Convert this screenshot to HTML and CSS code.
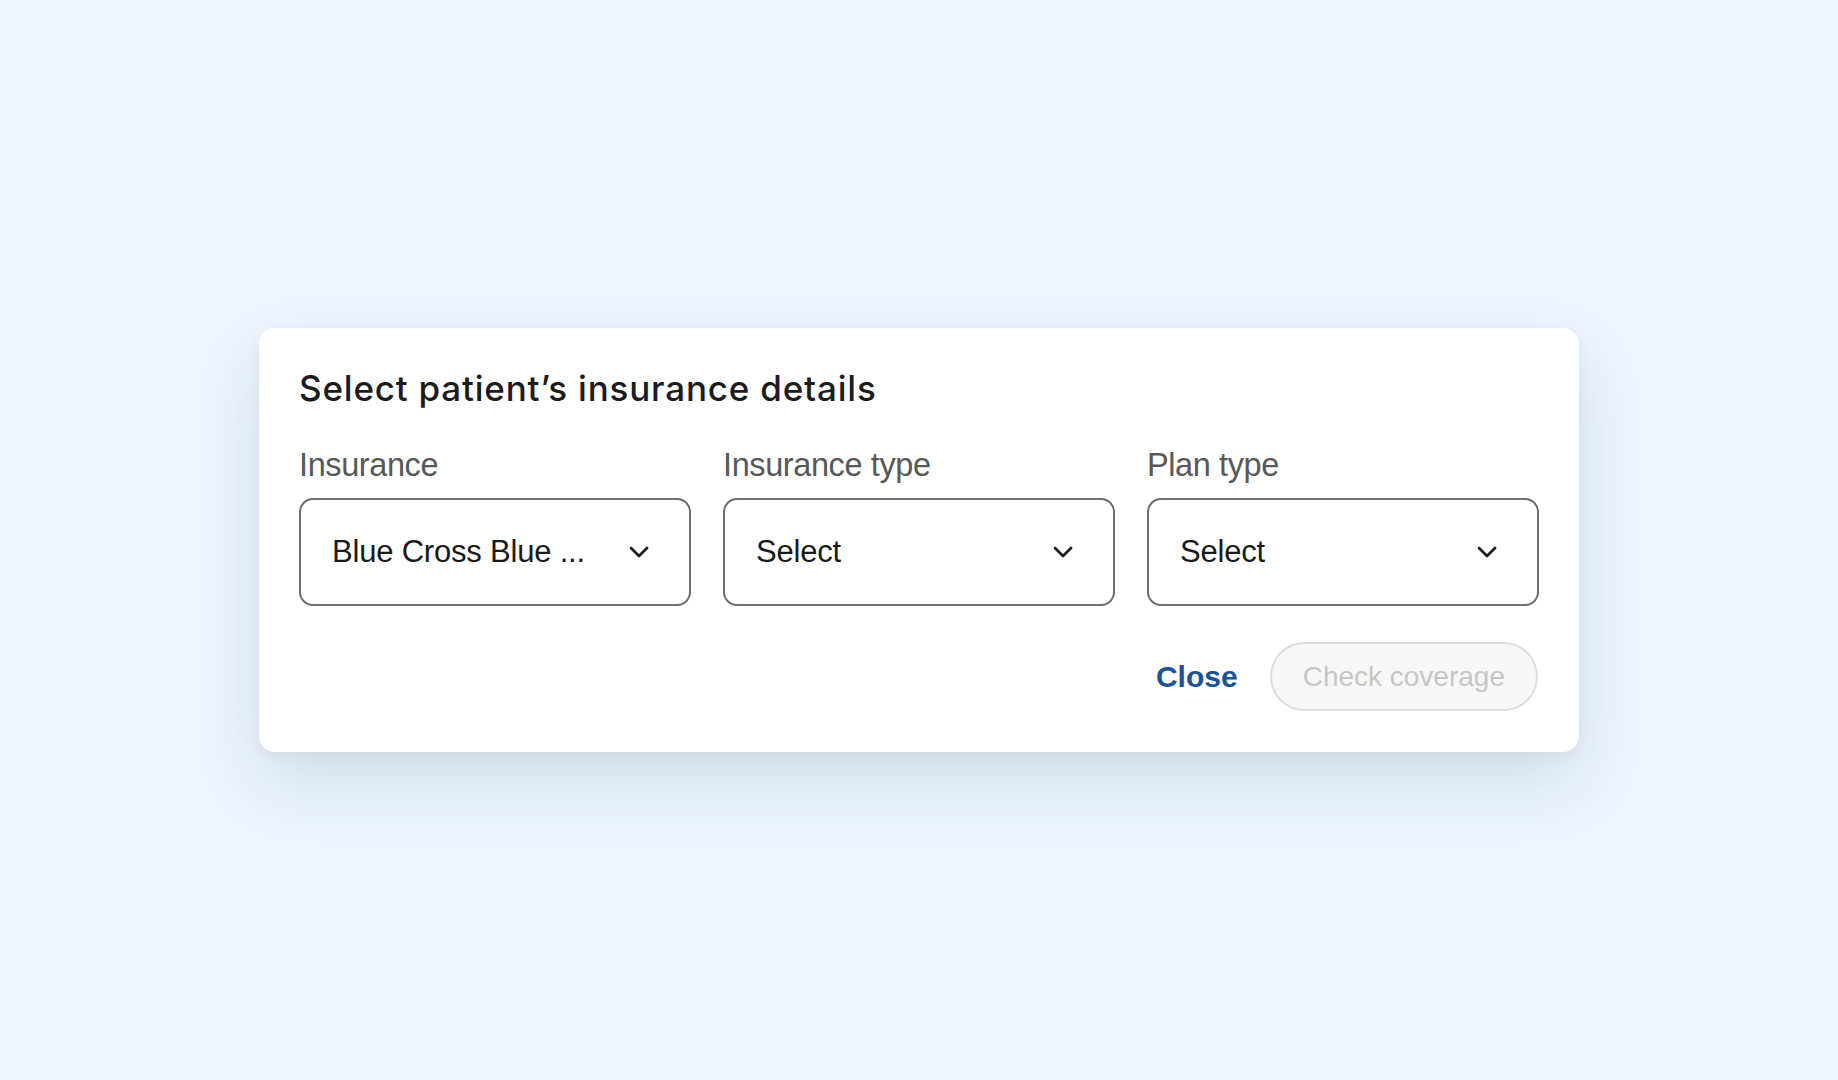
FILE: index.html
```html
<!DOCTYPE html>
<html lang="en">
<head>
<meta charset="utf-8">
<title>Select patient's insurance details</title>
<link rel="stylesheet" href="styles.css">
</head>
<body>
<main class="page">
  <section class="card">
    <h1 class="title">Select patient’s insurance details</h1>
    <div class="fields">
      <div class="field">
        <div class="label">Insurance</div>
        <div class="select">
          <span class="value">Blue Cross Blue ...</span>
          <svg class="chev" viewBox="0 0 20 12" width="20" height="12"><path d="M2 2 L10 10 L18 2" fill="none" stroke="#1f1f1f" stroke-width="2.8" stroke-linecap="round" stroke-linejoin="round"/></svg>
        </div>
      </div>
      <div class="field">
        <div class="label">Insurance type</div>
        <div class="select">
          <span class="value">Select</span>
          <svg class="chev" viewBox="0 0 20 12" width="20" height="12"><path d="M2 2 L10 10 L18 2" fill="none" stroke="#1f1f1f" stroke-width="2.8" stroke-linecap="round" stroke-linejoin="round"/></svg>
        </div>
      </div>
      <div class="field">
        <div class="label">Plan type</div>
        <div class="select">
          <span class="value">Select</span>
          <svg class="chev" viewBox="0 0 20 12" width="20" height="12"><path d="M2 2 L10 10 L18 2" fill="none" stroke="#1f1f1f" stroke-width="2.8" stroke-linecap="round" stroke-linejoin="round"/></svg>
        </div>
      </div>
    </div>
    <div class="actions">
      <button class="link-btn" type="button">Close</button>
      <button class="pill-btn" type="button" disabled>Check coverage</button>
    </div>
  </section>
</main>
</body>
</html>
```

FILE: styles.css
```css
* { box-sizing: border-box; }

html, body {
  margin: 0;
  padding: 0;
}

body {
  background: #eef5fd;
  font-family: "Liberation Sans", Arial, sans-serif;
  color: #1d1d1d;
}

.page {
  min-height: 1080px;
  display: flex;
  align-items: center;
  justify-content: center;
}

.card {
  width: 1320px;
  background: #ffffff;
  border-radius: 16px;
  padding: 40px 40px 41px;
  box-shadow: 0 30px 70px rgba(40, 70, 110, 0.14), 0 4px 12px rgba(40, 70, 110, 0.05);
}

.title {
  margin: 0;
  font-family: "Inter", "Liberation Sans", sans-serif;
  font-weight: 500;
  font-size: 35px;
  line-height: 40px;
  color: #1c1c1c;
  letter-spacing: 0.8px;
}

.fields {
  display: grid;
  grid-template-columns: repeat(3, 1fr);
  gap: 32px;
  margin-top: 39px;
}

.label {
  font-size: 32.5px;
  line-height: 36px;
  color: #585858;
  letter-spacing: -0.4px;
  margin-bottom: 15px;
}

.select {
  height: 108px;
  border: 2px solid #6f6f6f;
  border-radius: 14px;
  padding: 0 40px 0 31px;
  display: flex;
  align-items: center;
  justify-content: space-between;
}

.value {
  font-size: 31px;
  color: #1a1a1a;
  letter-spacing: -0.2px;
}

.chev {
  display: block;
}

.actions {
  display: flex;
  justify-content: flex-end;
  align-items: center;
  gap: 32px;
  margin-top: 36px;
  padding-right: 1px;
}

.link-btn {
  background: none;
  border: none;
  padding: 0;
  font-family: "Liberation Sans", Arial, sans-serif;
  font-weight: 700;
  font-size: 30px;
  color: #17549a;
  cursor: pointer;
}

.pill-btn {
  height: 69px;
  padding: 0 31px;
  border: 2px solid #dedede;
  border-radius: 35px;
  background: #f7f7f7;
  font-family: "Liberation Sans", Arial, sans-serif;
  font-size: 28px;
  color: #c6c6c6;
}
```
